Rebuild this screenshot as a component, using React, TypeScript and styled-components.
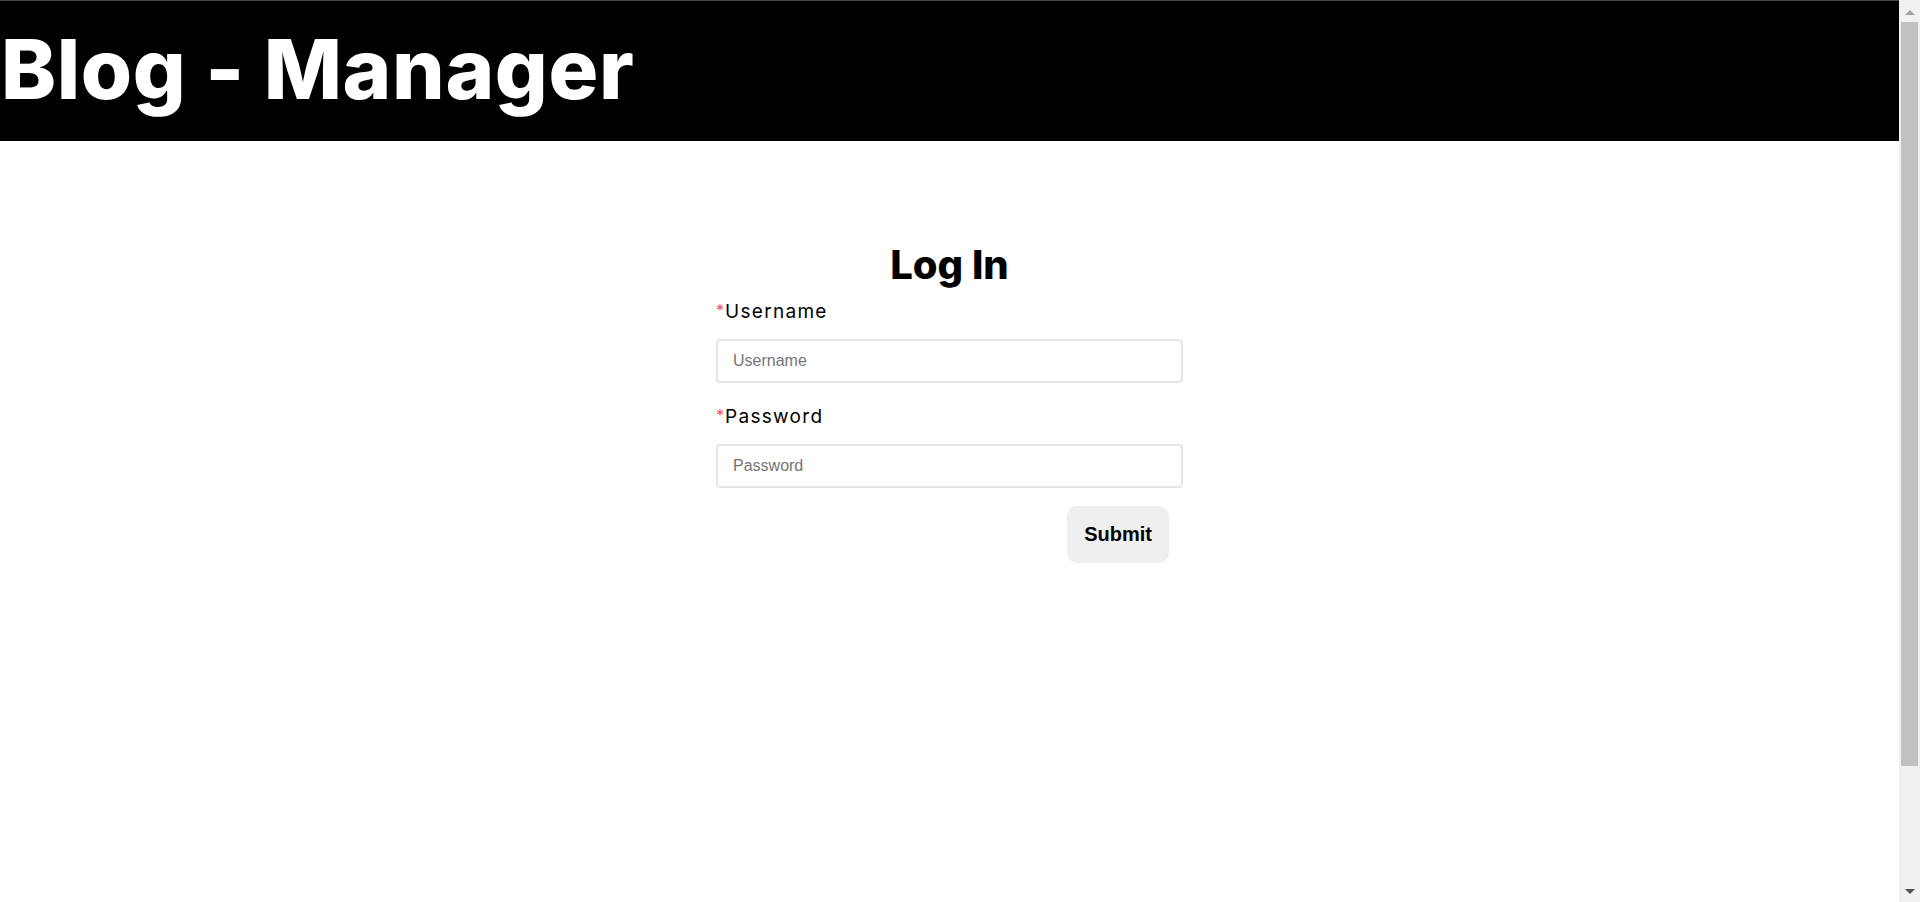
import React from "react";
import styled, { createGlobalStyle } from "styled-components";

const GlobalStyle = createGlobalStyle`
  body {
    margin: 0;
    background: #fff;
    overflow: hidden;
    font-family: Inter, "Liberation Sans", sans-serif;
  }
`;

const Page = styled.div`
  display: flex;
  height: 100vh;
`;

const Content = styled.div`
  flex: 1;
  min-width: 0;
  border-top: 1px solid #454545;
`;

// window scroll rail as it appears in the screenshot
const ScrollRail = styled.div`
  width: 21px;
  flex-shrink: 0;
  background: #f1f1f1;
  display: flex;
  flex-direction: column;
  align-items: center;
`;

const ArrowBox = styled.div<{ $down?: boolean }>`
  height: 22px;
  width: 100%;
  display: flex;
  align-items: center;
  justify-content: center;
  margin-top: ${(p) => (p.$down ? "auto" : "0")};
  &::before {
    content: "";
    width: 0;
    height: 0;
    border-left: 5px solid transparent;
    border-right: 5px solid transparent;
    ${(p) =>
      p.$down
        ? "border-top: 5px solid #505050; margin-top: 1px;"
        : "border-bottom: 5px solid #a3a3a3; margin-top: 2px;"}
  }
`;

const Thumb = styled.div`
  width: 17px;
  height: 744px;
  background: #c1c1c1;
`;

const Header = styled.header`
  background: #000;
  height: 140px;
`;

const Title = styled.h1`
  margin: 0;
  padding-left: 1px;
  color: #fff;
  font-family: Inter, "Liberation Sans", sans-serif;
  font-weight: 800;
  font-size: 83px;
  line-height: 136px;
  letter-spacing: 0.6px;
  white-space: nowrap;
`;

const Main = styled.main`
  display: flex;
  justify-content: center;
  padding-top: 100px;
`;

const Form = styled.form`
  width: 467px;
  display: flex;
  flex-direction: column;
`;

const FormTitle = styled.h2`
  margin: 0 0 9px;
  text-align: center;
  font-weight: 800;
  font-size: 40px;
  line-height: 48px;
  color: #000;
`;

const Field = styled.div`
  display: flex;
  flex-direction: column;
  & + & {
    margin-top: 20px;
  }
`;

const Label = styled.label`
  font-size: 19px;
  line-height: 24px;
  letter-spacing: 1.3px;
  color: #000;
  margin-bottom: 15px;
`;

const Required = styled.span`
  color: #ff4d4f;
  font-size: 16px;
  letter-spacing: 0;
  margin-right: 1px;
  vertical-align: 2px;
`;

const Input = styled.input`
  box-sizing: border-box;
  height: 44px;
  width: 100%;
  padding: 0 15px;
  border: 2px solid #e6e6e6;
  border-radius: 4px;
  font-family: "Liberation Sans", Arial, sans-serif;
  font-size: 16px;
  color: #000;
  outline: none;
  &::placeholder {
    color: #757575;
  }
`;

const SubmitButton = styled.button`
  align-self: flex-end;
  margin: 18px 14px 0 0;
  height: 57px;
  padding: 0 17px;
  border: none;
  border-radius: 10px;
  background: #efefef;
  font-family: "Liberation Sans", Arial, sans-serif;
  font-weight: 700;
  font-size: 20px;
  color: #000;
  cursor: pointer;
`;

export default function App() {
  return (
    <Page>
      <GlobalStyle />
      <Content>
        <Header>
          <Title>Blog - Manager</Title>
        </Header>
        <Main>
          <Form onSubmit={(e) => e.preventDefault()}>
            <FormTitle>Log In</FormTitle>
            <Field>
              <Label htmlFor="username">
                <Required>*</Required>Username
              </Label>
              <Input id="username" placeholder="Username" />
            </Field>
            <Field>
              <Label htmlFor="password">
                <Required>*</Required>Password
              </Label>
              <Input id="password" type="password" placeholder="Password" />
            </Field>
            <SubmitButton type="submit">Submit</SubmitButton>
          </Form>
        </Main>
      </Content>
      <ScrollRail>
        <ArrowBox />
        <Thumb />
        <ArrowBox $down />
      </ScrollRail>
    </Page>
  );
}
